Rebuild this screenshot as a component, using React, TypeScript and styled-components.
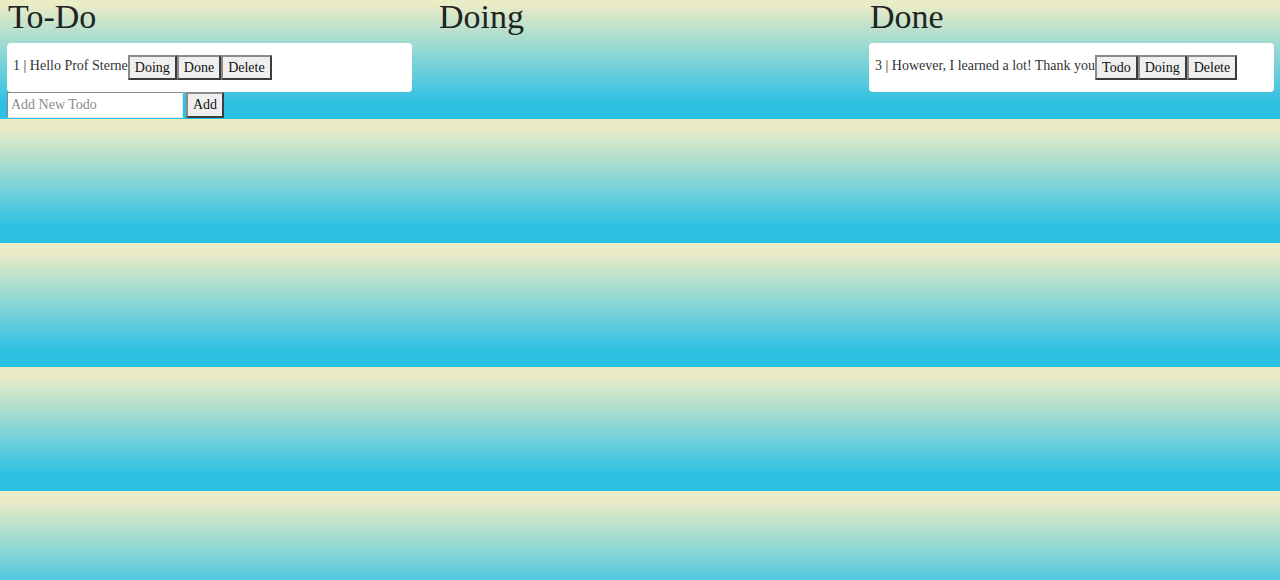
import styled, { createGlobalStyle } from "styled-components";

type Status = "todo" | "doing" | "done";

interface Todo {
  id: number;
  text: string;
  status: Status;
}

const TODOS: Todo[] = [
  { id: 1, text: "Hello Prof Sterne", status: "todo" },
  { id: 3, text: "However, I learned a lot! Thank you", status: "done" },
];

const COLUMNS: { key: Status; title: string }[] = [
  { key: "todo", title: "To-Do" },
  { key: "doing", title: "Doing" },
  { key: "done", title: "Done" },
];

const ACTIONS: Record<Status, string[]> = {
  todo: ["Doing", "Done", "Delete"],
  doing: ["Todo", "Done", "Delete"],
  done: ["Todo", "Doing", "Delete"],
};

const GlobalStyle = createGlobalStyle`
  * { box-sizing: border-box; }
  html { min-height: 100%; }
  body {
    margin: 0;
    min-height: 580px;
    font-family: "Liberation Serif", "Times New Roman", serif;
    background: linear-gradient(to bottom, #eaecc6 8%, #2bc0e4 88%);
    background-size: 100% 124px;
    background-position: 0 -5px;
    background-repeat: repeat;
  }
`;

const Board = styled.main`
  display: grid;
  grid-template-columns: repeat(3, 405px);
  column-gap: 26px;
  padding: 0 7px;
  align-items: start;
`;

const Column = styled.section`
  display: flex;
  flex-direction: column;
`;

const Title = styled.h1`
  margin: 0 0 9px 1px;
  font-size: 34px;
  line-height: 34px;
  font-weight: 400;
  color: #1f2422;
`;

const Card = styled.div`
  display: flex;
  align-items: center;
  height: 49px;
  padding: 0 6px;
  background: #ffffff;
  border-radius: 4px;
`;

const CardText = styled.span`
  font-size: 14px;
  color: #333;
  margin-bottom: 3px;
  white-space: nowrap;
`;

const Button = styled.button<{ $h?: number }>`
  height: ${(p) => p.$h ?? 25}px;
  padding: 0 5px;
  font-family: "Liberation Serif", "Times New Roman", serif;
  font-size: 14px;
  color: #111;
  background: #efefef;
  border: 2px solid;
  border-color: #8a8a8a #3c3c3c #3c3c3c #8a8a8a;
  cursor: pointer;
`;

const AddRow = styled.form`
  display: flex;
  gap: 3px;
`;

const Input = styled.input`
  width: 176px;
  height: 26px;
  padding: 0 3px;
  font-family: "Liberation Serif", "Times New Roman", serif;
  font-size: 14px;
  background: #fff;
  border: 1px solid;
  border-color: #8a8a8a #e6e6e6 #e6e6e6 #8a8a8a;
  outline: none;
  &::placeholder { color: #8a8a8a; }
`;

export default function App() {
  return (
    <>
      <GlobalStyle />
      <Board>
        {COLUMNS.map((col) => (
          <Column key={col.key}>
            <Title>{col.title}</Title>
            {TODOS.filter((t) => t.status === col.key).map((t) => (
              <Card key={t.id}>
                <CardText>
                  {t.id} | {t.text}
                </CardText>
                {ACTIONS[col.key].map((a) => (
                  <Button key={a} type="button">
                    {a}
                  </Button>
                ))}
              </Card>
            ))}
            {col.key === "todo" && (
              <AddRow onSubmit={(e) => e.preventDefault()}>
                <Input placeholder="Add New Todo" />
                <Button type="submit" $h={26}>
                  Add
                </Button>
              </AddRow>
            )}
          </Column>
        ))}
      </Board>
    </>
  );
}
